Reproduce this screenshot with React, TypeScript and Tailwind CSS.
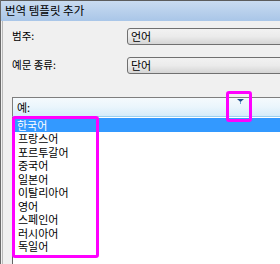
import React from 'react';

const languages = ['한국어', '프랑스어', '포르투갈어', '중국어', '일본어', '이탈리아어', '영어', '스페인어', '러시아어', '독일어'];

const font = { fontFamily: '"Noto Sans CJK KR", "Noto Sans", sans-serif' };

const Combo = ({ value }: { value: string }) => (
  <div className="ml-auto h-[17px] w-[160px] -mr-[7px] flex items-center rounded-l-[3px] border border-[#707070] bg-gradient-to-b from-[#f2f2f2] via-[#ebebeb] to-[#d5d5d5] pl-[3px] text-[11px] leading-none text-black">
    {value}
  </div>
);

export default function App() {
  return (
    <div className="relative w-[280px] h-[264px] overflow-hidden bg-[#f0f0f0] border-l border-[#6b6b6b]" style={font}>
      {/* title bar */}
      <div className="h-[21px] flex items-center pl-[4px] border-t border-[#5c5c5c] bg-gradient-to-b from-[#c9dbf0] to-[#a9c6e8] text-[11.5px] leading-none text-black">
        번역 템플릿 추가
      </div>

      <div className="h-[243px] ml-[1px] border-l border-[#b9b9b9] flex flex-col">
        <div className="mt-[7px] pl-[9px] flex items-center h-[17px] text-[10.5px] leading-none text-black">
          <span>범주:</span>
          <Combo value="언어" />
        </div>
        <div className="mt-[12px] pl-[9px] flex items-center h-[17px] text-[10.5px] leading-none text-black">
          <span>예문 종류:</span>
          <Combo value="단어" />
        </div>

        {/* open combo */}
        <div className="mt-[23px] ml-[9px] h-[20px] flex items-center border-t border-l border-[#7e7e7e] border-b border-b-[#9bd0f0] bg-gradient-to-b from-[#f5fafd] via-[#eaf5fc] to-[#d6ecfa] pl-[4px] text-[11px] leading-none text-black relative">
          예:
          <svg className="absolute left-[224px] top-[1px]" width="7" height="5" viewBox="0 0 7 5">
            <polygon points="0,0 7,0 3.5,3" fill="#1f4f8c" />
            <rect x="3" y="3" width="1" height="2" fill="#6aa6d8" />
          </svg>
        </div>

        {/* list */}
        <div className="ml-[9px] flex-1 bg-white border-l border-[#646464] pt-[1px] pl-[1px] text-[11px] leading-none text-black">
          {languages.map((l, i) => (
            <div
              key={l}
              className={
                i === 0
                  ? 'h-[14px] flex items-center pl-[3px] bg-[#3399ff] text-white'
                  : 'h-[13.5px] flex items-center pl-[4px]'
              }
            >
              {l}
            </div>
          ))}
        </div>
      </div>

      {/* annotation boxes */}
      <div className="absolute left-[11px] top-[116px] w-[87px] h-[142px] border-[3px] border-[#ff00ff] rounded-[3px]" />
      <div className="absolute left-[225px] top-[91px] w-[26px] h-[31px] border-[3px] border-[#ff00ff] rounded-[3px]" />
    </div>
  );
}
